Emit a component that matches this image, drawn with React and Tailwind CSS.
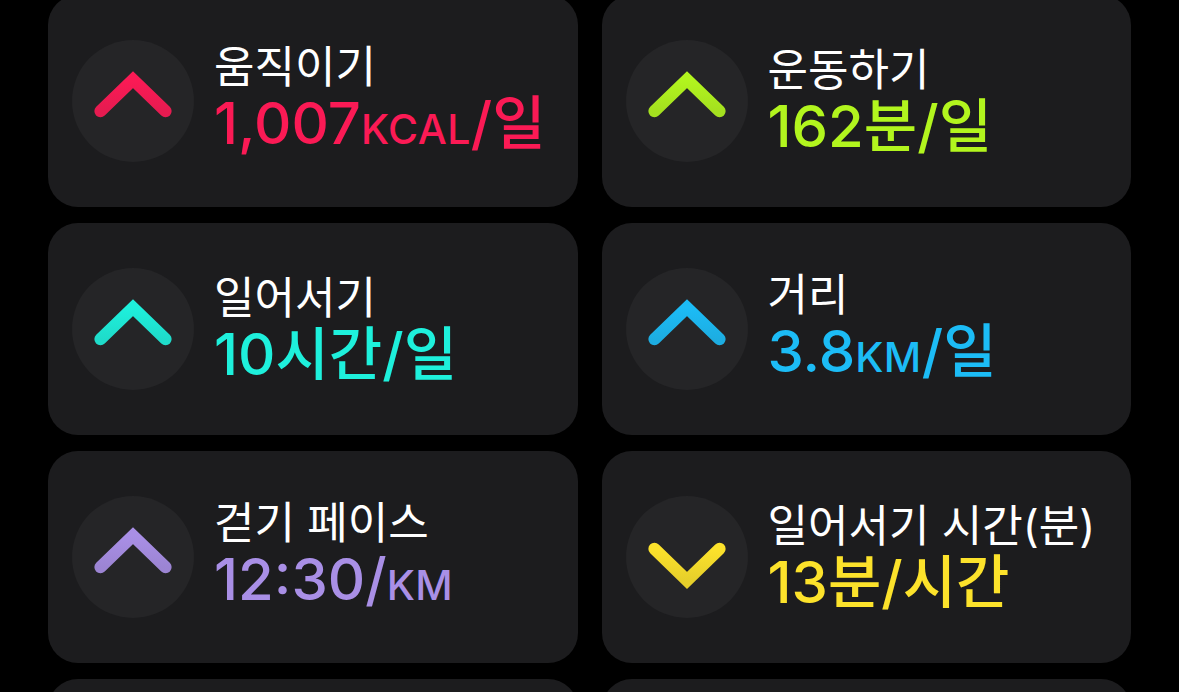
import React from 'react';

const metrics = [
  {
    title: '움직이기',
    color: '#fb1a55',
    dir: 'up',
    value: [
      { t: '1,007' },
      { t: 'KCAL', small: true },
      { t: '/일' },
    ],
  },
  {
    title: '운동하기',
    color: '#b2f51e',
    dir: 'up',
    value: [{ t: '162분/일' }],
  },
  {
    title: '일어서기',
    color: '#1ef0dc',
    dir: 'up',
    value: [{ t: '10시간/일' }],
  },
  {
    title: '거리',
    color: '#1cbcf6',
    dir: 'up',
    value: [{ t: '3.8' }, { t: 'KM', small: true }, { t: '/일' }],
  },
  {
    title: '걷기 페이스',
    color: '#a98fe6',
    dir: 'up',
    value: [{ t: '12:30/' }, { t: 'KM', small: true }],
  },
  {
    title: '일어서기 시간(분)',
    color: '#fce22b',
    dir: 'down',
    value: [{ t: '13분/시간' }],
  },
];

// Trend arrow inside the round badge
const TrendBadge = ({ color, dir }) => {
  const d = dir === 'up' ? 'M28 70 L60 39 L92 70' : 'M28 52 L60 83 L92 52';
  const id = `grad-${color.slice(1)}-${dir}`;
  return (
    <div className="w-[122px] h-[122px] shrink-0 rounded-full bg-[#252527]">
      <svg width="122" height="122" viewBox="0 0 120 120">
        <defs>
          <linearGradient id={id} x1="0" y1="0" x2="0" y2="1">
            <stop offset="0" stopColor={color} stopOpacity="1" />
            <stop offset="1" stopColor={color} stopOpacity="0.9" />
          </linearGradient>
        </defs>
        <path
          d={d}
          fill="none"
          stroke={`url(#${id})`}
          strokeWidth="12"
          strokeLinecap="round"
          strokeLinejoin="miter"
        />
      </svg>
    </div>
  );
};

const MetricCard = ({ title, color, dir, value }) => (
  <div className="h-[212px] rounded-[30px] bg-[#1c1c1e] flex items-center pl-6 pr-4">
    <TrendBadge color={color} dir={dir} />
    <div className="ml-5 flex flex-col whitespace-nowrap">
      <div className="text-[44px] leading-[50px] text-white font-normal">{title}</div>
      <div className="text-[58px] leading-[62px] font-medium" style={{ color }}>
        {value.map((part, i) =>
          part.small ? (
            <span key={i} className="inline-block text-[41px] leading-[62px] tracking-[0.01em]">
              {part.t}
            </span>
          ) : (
            <React.Fragment key={i}>{part.t}</React.Fragment>
          )
        )}
      </div>
    </div>
  </div>
);

export default function App() {
  return (
    <div
      className="w-[1179px] h-[692px] overflow-hidden bg-black"
      style={{ fontFamily: '"Inter", "Noto Sans CJK KR", sans-serif' }}
    >
      <div className="-mt-[5px] px-12 grid grid-cols-2 gap-x-6 gap-y-4">
        {metrics.map((m) => (
          <MetricCard key={m.title} {...m} />
        ))}
        {/* next row, scrolled below the fold */}
        <div className="h-[212px] rounded-[30px] bg-[#1c1c1e]" />
        <div className="h-[212px] rounded-[30px] bg-[#1c1c1e]" />
      </div>
    </div>
  );
}
